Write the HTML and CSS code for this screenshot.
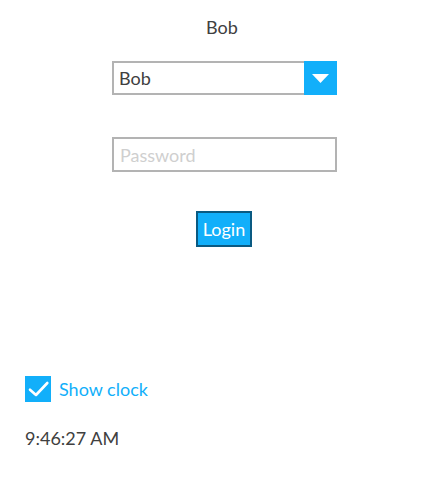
FILE: index.html
```html
<!DOCTYPE html>
<html>
<head>
<meta charset="utf-8">
<link rel="stylesheet" href="styles.css">
</head>
<body>
<div class="page">
  <div class="user-name">Bob</div>
  <div class="form">
    <div class="select">
      <span class="select-value">Bob</span>
      <span class="select-btn">
        <svg width="17" height="9" viewBox="0 0 17 9"><path d="M0 0 H17 L8.5 9 Z" fill="#fff"/></svg>
      </span>
    </div>
    <div class="input"><span class="placeholder">Password</span></div>
    <div class="login-row"><button class="login">Login</button></div>
  </div>
  <div class="bottom">
    <label class="check-row">
      <span class="checkbox">
        <svg width="26" height="26" viewBox="0 0 26 26"><path d="M5 13.7 L11 19 L22.3 7" fill="none" stroke="#fff" stroke-width="2.6" stroke-linecap="round" stroke-linejoin="round"/></svg>
      </span>
      <span class="check-label">Show clock</span>
    </label>
    <div class="clock">9:46:27 AM</div>
  </div>
</div>
</body>
</html>
```

FILE: styles.css
```css
html, body {
  margin: 0;
  padding: 0;
  background: #fff;
}
body {
  font-family: Lato, "Open Sans", sans-serif;
  color: #404040;
  font-size: 18px;
}
.page {
  width: 444px;
  height: 491px;
  display: flex;
  flex-direction: column;
}
.user-name {
  text-align: center;
  font-size: 18px;
  line-height: 22px;
  padding-top: 16px;
}
.form {
  width: 225px;
  margin-left: 112px;
  margin-top: 23px;
  display: flex;
  flex-direction: column;
}
.select {
  height: 34px;
  box-sizing: border-box;
  border: 2px solid #b3b3b3;
  display: flex;
  align-items: center;
  position: relative;
}
.select-value {
  padding-left: 5px;
  font-size: 18px;
  color: #404040;
}
.select-btn {
  position: absolute;
  right: -2px;
  top: -2px;
  bottom: -2px;
  width: 33px;
  background: #12affa;
  display: flex;
  align-items: center;
  justify-content: center;
}
.input {
  margin-top: 42px;
  height: 35px;
  box-sizing: border-box;
  border: 2px solid #b3b3b3;
  display: flex;
  align-items: center;
}
.placeholder {
  padding-left: 6px;
  font-size: 18px;
  color: #cfcfcf;
}
.login-row {
  margin-top: 39px;
  display: flex;
  justify-content: center;
}
.login {
  width: 56px;
  height: 36px;
  box-sizing: border-box;
  border: 2px solid #0a5a82;
  background: #12affa;
  color: #fff;
  font-family: Lato, sans-serif;
  font-size: 18px;
  padding: 0;
  margin-right: 1px;
}
.bottom {
  margin-top: 129px;
  padding-left: 25px;
}
.check-row {
  display: flex;
  align-items: center;
  height: 26px;
}
.checkbox {
  width: 26px;
  height: 26px;
  background: #12affa;
  display: flex;
}
.check-label {
  margin-left: 8px;
  color: #12affa;
  font-size: 18px;
}
.clock {
  margin-top: 25px;
  font-size: 18px;
  line-height: 22px;
}
```
